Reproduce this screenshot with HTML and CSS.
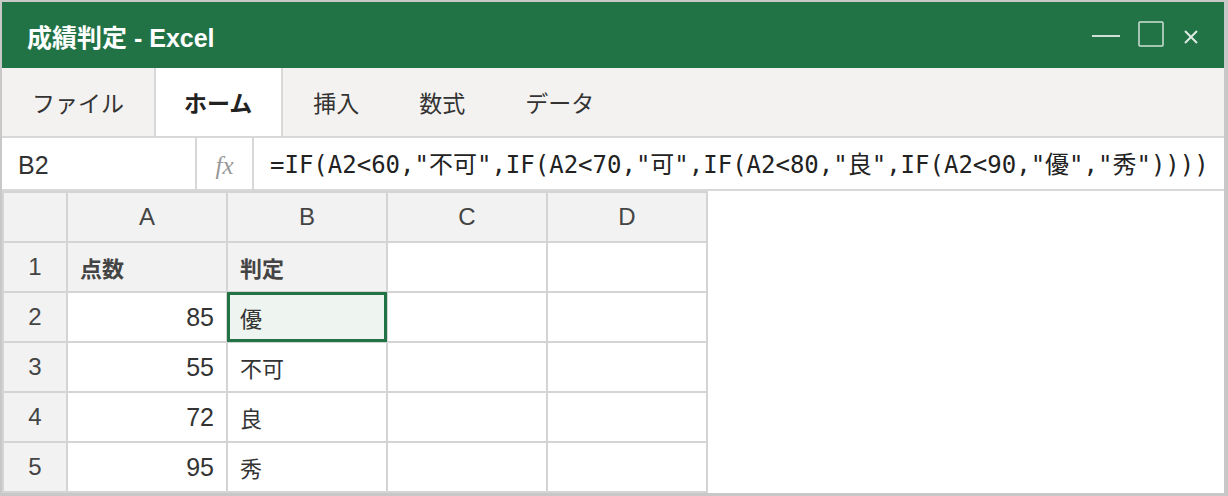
FILE: index.html
```html
<!DOCTYPE html>
<html lang="ja">
<head>
    <meta charset="UTF-8">
    <meta name="viewport" content="width=device-width, initial-scale=1.0">
    <title>成績判定 - Excel</title>
    <link rel="stylesheet" href="styles.css">
</head>
<body>
    <div class="window">
        <div class="title-bar">
            <span class="title">成績判定 - Excel</span>
            <div class="controls">
                <svg class="ctrl-min" width="28" height="4" viewBox="0 0 28 4"><line x1="0" y1="2" x2="28" y2="2" /></svg>
                <svg class="ctrl-max" width="26" height="26" viewBox="0 0 26 26"><rect x="1" y="1" width="24" height="24" rx="1" /></svg>
                <svg class="ctrl-close" width="14" height="14" viewBox="0 0 14 14"><path d="M1 1 L13 13 M13 1 L1 13" /></svg>
            </div>
        </div>

        <div class="ribbon">
            <div class="tab">ファイル</div>
            <div class="tab active">ホーム</div>
            <div class="tab">挿入</div>
            <div class="tab">数式</div>
            <div class="tab">データ</div>
        </div>

        <div class="formula-bar">
            <div class="name-box">B2</div>
            <div class="fx">fx</div>
            <div class="formula">=IF(A2&lt;60,"不可",IF(A2&lt;70,"可",IF(A2&lt;80,"良",IF(A2&lt;90,"優","秀"))))</div>
        </div>

        <div class="sheet">
            <div class="grid">
                <div class="corner"></div>
                <div class="col-head">A</div>
                <div class="col-head">B</div>
                <div class="col-head">C</div>
                <div class="col-head">D</div>

                <div class="row-head">1</div>
                <div class="cell label">点数</div>
                <div class="cell label">判定</div>
                <div class="cell"></div>
                <div class="cell"></div>

                <div class="row-head">2</div>
                <div class="cell num">85</div>
                <div class="cell selected">優</div>
                <div class="cell"></div>
                <div class="cell"></div>

                <div class="row-head">3</div>
                <div class="cell num">55</div>
                <div class="cell">不可</div>
                <div class="cell"></div>
                <div class="cell"></div>

                <div class="row-head">4</div>
                <div class="cell num">72</div>
                <div class="cell">良</div>
                <div class="cell"></div>
                <div class="cell"></div>

                <div class="row-head">5</div>
                <div class="cell num">95</div>
                <div class="cell">秀</div>
                <div class="cell"></div>
                <div class="cell"></div>
            </div>
        </div>
    </div>
</body>
</html>
```

FILE: styles.css
```css
body {
    margin: 0;
    font-family: "Liberation Sans", "Noto Sans CJK JP", sans-serif;
    color: #333;
    background-color: #fff;
}

.window {
    width: 1228px;
    height: 496px;
    box-sizing: border-box;
    border: 2px solid #c8c8c8;
    border-right-width: 4px;
    border-bottom-width: 3px;
    display: flex;
    flex-direction: column;
    background-color: #fff;
}

/* title bar */
.title-bar {
    height: 66px;
    flex-shrink: 0;
    background-color: #217346;
    color: #fff;
    display: flex;
    align-items: center;
    justify-content: space-between;
    padding: 2px 26px 0 25px;
    box-sizing: border-box;
}

.title {
    font-size: 25px;
    font-weight: bold;
}

.controls {
    display: flex;
    align-items: center;
    gap: 18px;
    margin-top: -4px;
}

.controls svg {
    display: block;
    fill: none;
    stroke: rgba(255, 255, 255, 0.78);
}

.ctrl-min {
    margin-top: 4px;
}

.ctrl-min line {
    stroke-width: 2;
}

.ctrl-max rect {
    stroke-width: 1.5;
}

.ctrl-close {
    margin-left: 2px;
    margin-top: 6px;
}

.ctrl-close path {
    stroke-width: 2;
    stroke: rgba(255, 255, 255, 0.85);
}

/* ribbon tabs */
.ribbon {
    height: 68px;
    flex-shrink: 0;
    display: flex;
    background-color: #f3f2f1;
    border-bottom: 2px solid #d8d8d8;
}

.tab {
    display: flex;
    align-items: center;
    padding: 0 29px;
    font-size: 23px;
    color: #333;
    border-left: 1px solid transparent;
    border-right: 1px solid transparent;
}

.tab.active {
    background-color: #fff;
    font-weight: bold;
    color: #222;
    border-left: 2px solid #d8d8d8;
    border-right: 2px solid #d8d8d8;
    padding: 0 29px 0 28px;
}

/* formula bar */
.formula-bar {
    height: 51px;
    flex-shrink: 0;
    display: flex;
    border-bottom: 2px solid #d8d8d8;
}

.name-box {
    width: 195px;
    flex-shrink: 0;
    box-sizing: border-box;
    padding: 4px 0 0 16px;
    display: flex;
    align-items: center;
    font-size: 25px;
    color: #333;
    border-right: 2px solid #d8d8d8;
}

.fx {
    width: 57px;
    flex-shrink: 0;
    display: flex;
    align-items: center;
    justify-content: center;
    padding-top: 4px;
    box-sizing: border-box;
    font-family: "Liberation Serif", serif;
    font-style: italic;
    font-size: 25px;
    color: #999;
    border-right: 2px solid #d8d8d8;
}

.formula {
    display: flex;
    align-items: center;
    padding: 0 0 2px 16px;
    font-family: "DejaVu Sans Mono", "Noto Sans CJK JP", monospace;
    font-size: 24px;
    color: #222;
    white-space: nowrap;
}

/* sheet grid */
.sheet {
    flex: 1;
    background-color: #fff;
}

.grid {
    display: grid;
    grid-template-columns: 62px repeat(4, 158px);
    grid-auto-rows: 48px;
    gap: 2px;
    padding: 2px;
    width: fit-content;
    background-color: #d4d4d4;
}

.corner,
.col-head,
.row-head {
    background-color: #f2f2f2;
    display: flex;
    align-items: center;
    justify-content: center;
    font-size: 24px;
    color: #444;
}

.cell {
    background-color: #fff;
    display: flex;
    align-items: center;
    padding: 0 12px;
    font-size: 22px;
    color: #333;
}

.cell.label {
    background-color: #f2f2f2;
    font-weight: bold;
    color: #444;
}

.cell.num {
    justify-content: flex-end;
    font-size: 25px;
}

.cell.selected {
    background-color: #eef5f0;
    box-shadow: 0 0 0 1px #217346, inset 0 0 0 2px #217346;
    position: relative;
    z-index: 1;
}
```
